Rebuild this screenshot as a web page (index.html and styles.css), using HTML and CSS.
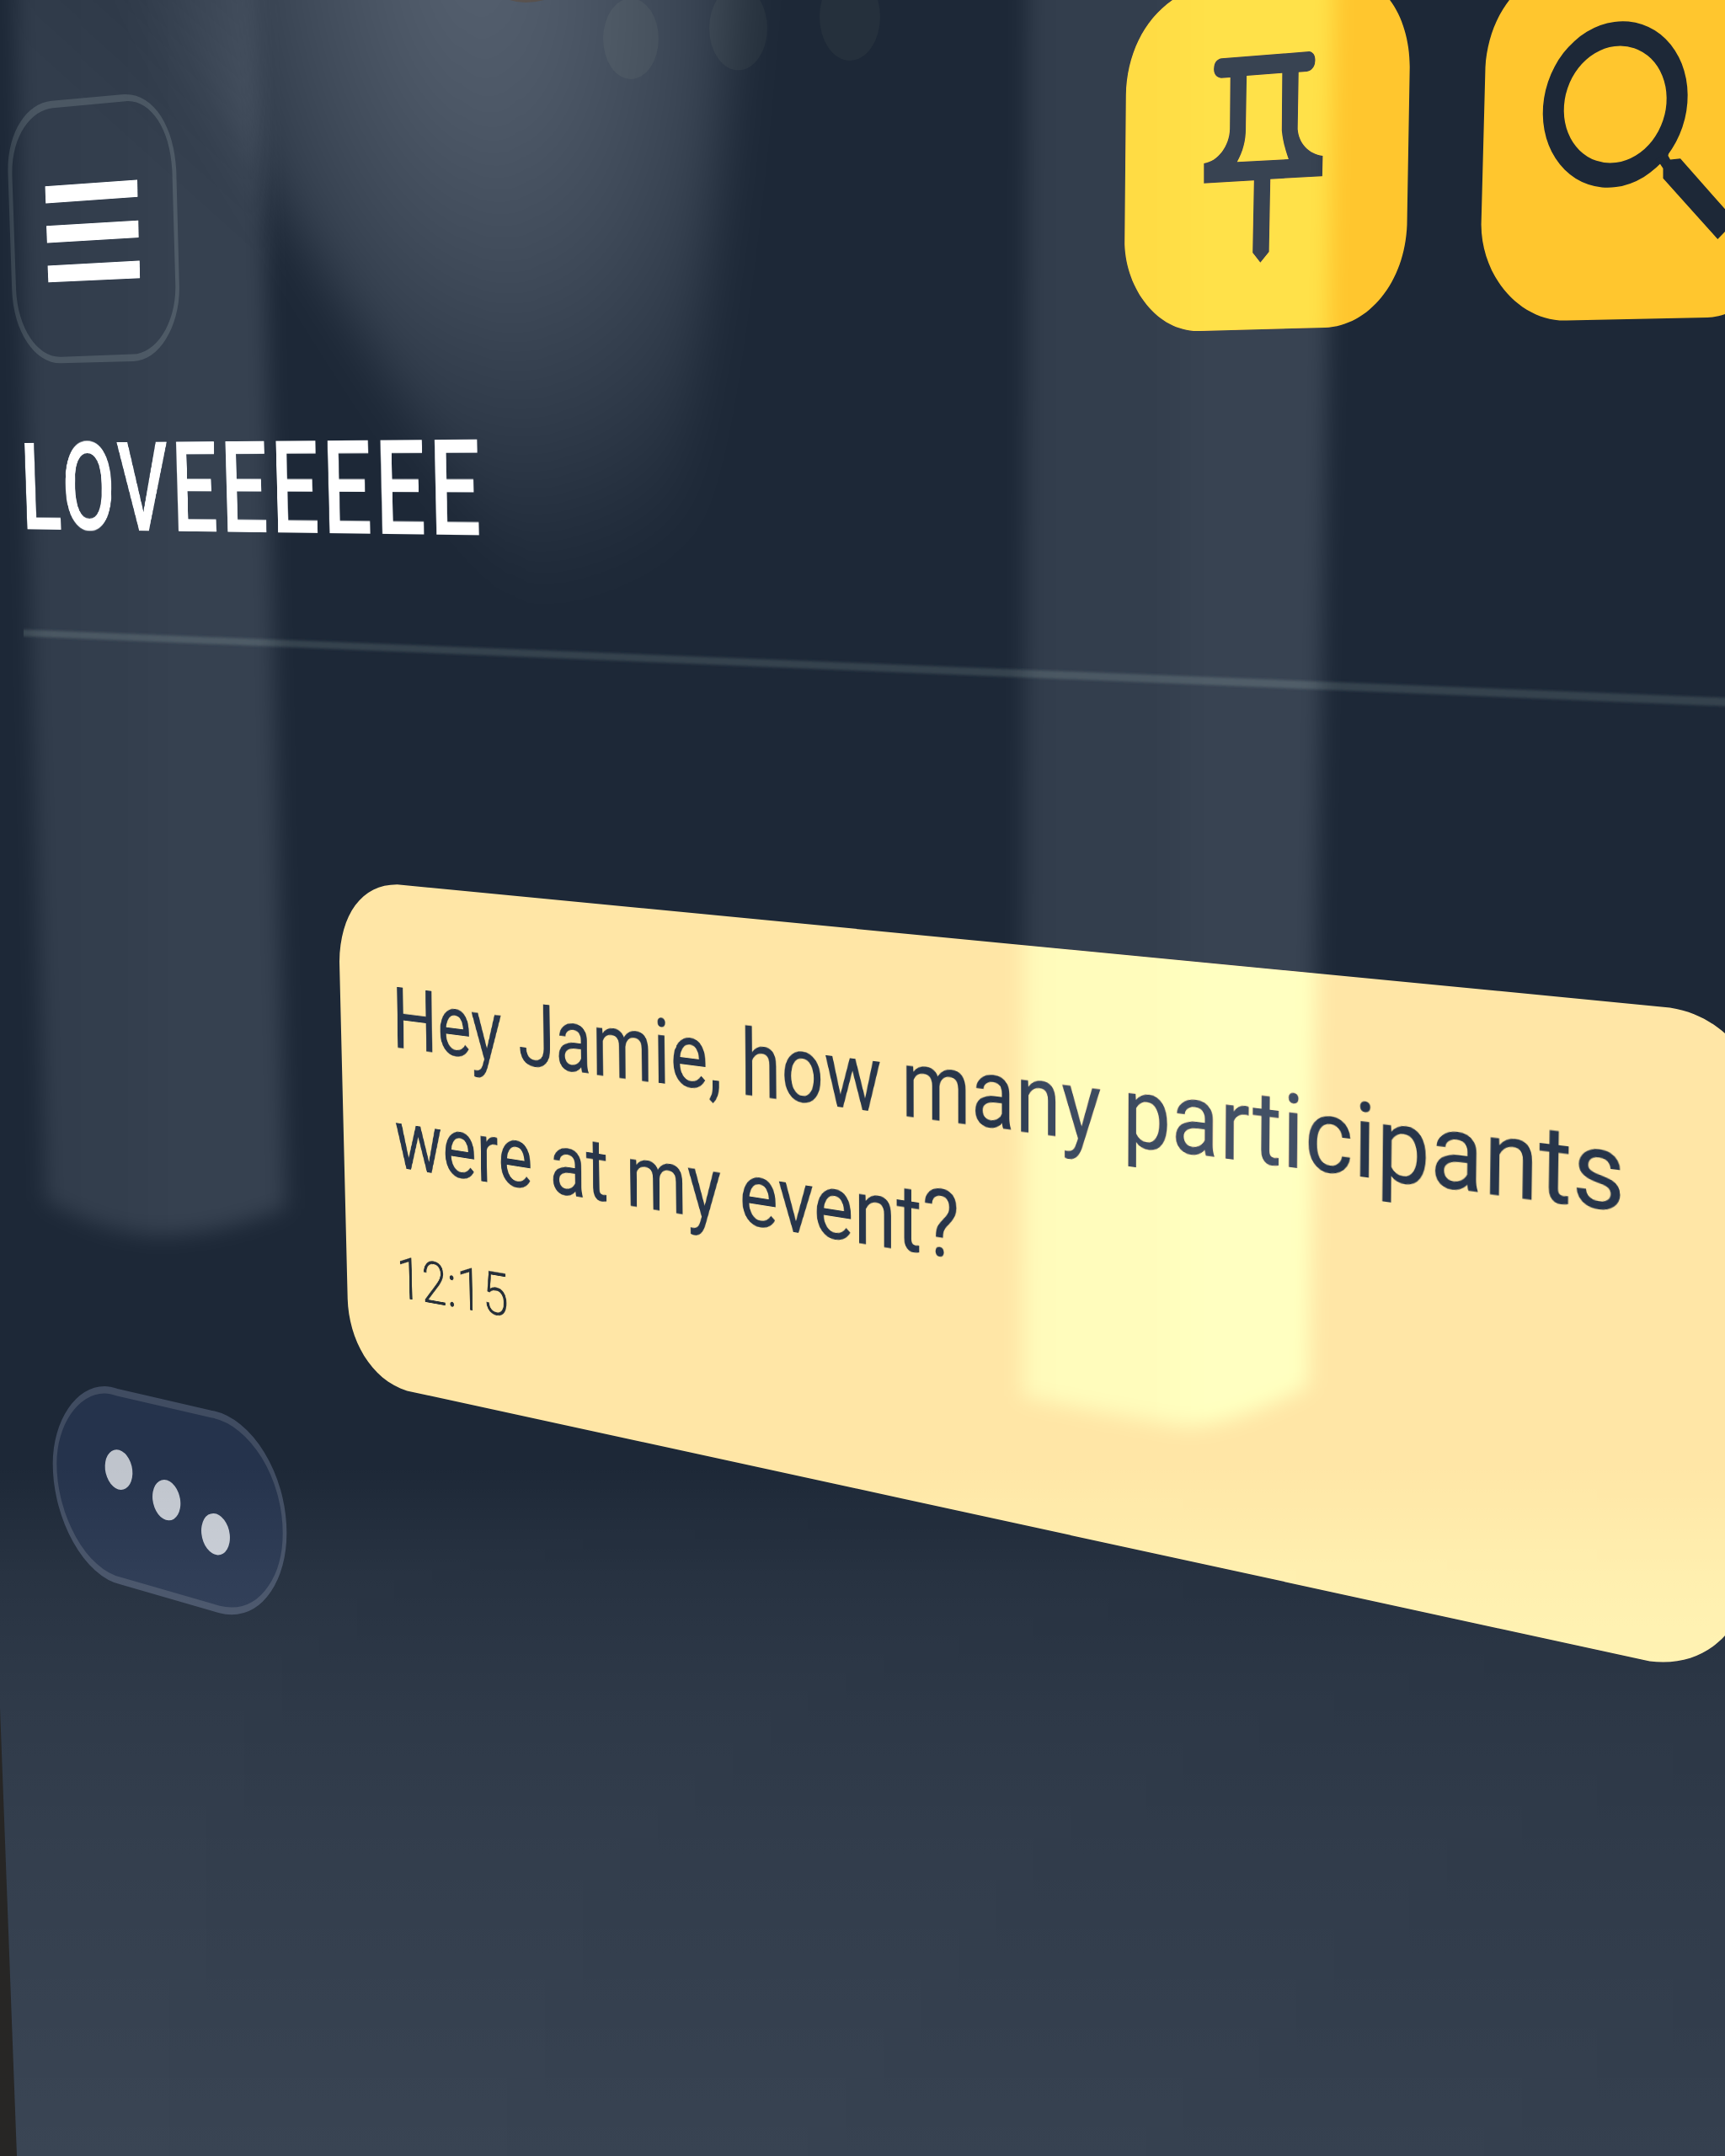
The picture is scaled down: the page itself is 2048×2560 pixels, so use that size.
FILE: index.html
```html
<!DOCTYPE html>
<html lang="en">
<head>
<meta charset="utf-8">
<title>Chat</title>
<link rel="stylesheet" href="styles.css">
</head>
<body>
<main class="screen">
  <svg class="layer" viewBox="0 0 2048 2560" aria-hidden="true">
    <defs>
      <filter id="hairline" filterUnits="userSpaceOnUse" x="0" y="700" width="2048" height="180"><feGaussianBlur stdDeviation="0 1.400"/></filter>
    </defs>
    <path class="bezel" d="M0 2028 L20 2560 H0Z"/>
    <path class="avatar" d="M600 -2 Q622 8 653 -2Z"/>

    <g class="typing-faint">
      <ellipse cx="749" cy="46" rx="33" ry="48"/>
      <ellipse cx="876.500" cy="33.500" rx="34.500" ry="50"/>
      <ellipse cx="1009" cy="20" rx="36" ry="52"/>
    </g>

    <!-- menu button -->
    <path class="outline" fill-rule="evenodd" d="M61 119.800 L147 112 C182 110 207 150 209.300 202.500 L212.800 336.400 C215 385 190 428 158.800 429 L72.700 431.300 C42 432 16 395 14.200 344 L9.600 210 C7 160 30 123 61 119.800Z
      M63 128.200 C36 131 13 162 14.500 210 L19.100 344 C21 390 45 425 72.700 423.700 L157.700 420.600 C186 420 210 382 208.200 336.400 L204.400 202.500 C202 152 178 118 149.300 120.200Z"/>
    <g class="menu-bars">
      <path d="M53.600 221.200 L163 213.600 L163.400 233.800 L54.300 241.500Z"/>
      <path d="M55.100 268.300 L164.200 261.800 L164.600 282 L55.900 288.600Z"/>
      <path d="M56.600 315.400 L165.700 309.600 L166.100 330.300 L57.400 335.300Z"/>
    </g>

    <path class="outline" filter="url(#hairline)" d="M28 747.500 L1024 787.500 L2048 828.500 V838.500 L1024 796.500 L28 755.500Z"/>

    <!-- pin button -->
    <path class="button" d="M1336.800 113 C1338 60 1362 15 1405 -8 L1625 -20 C1655 -8 1674 35 1673.700 80 L1670.500 266.700 C1668 335 1625 387 1573.200 389 L1425 393 C1376 395 1337 345 1335.200 290Z"/>
    <path class="glyph" fill-rule="evenodd" transform="translate(1200 0) scale(.5408 .3333)" d="M462 208 L655 183 C665 185 670 200 668 222 C667 240 660 252 650 255 L632 257 L630 460 C632 510 655 550 685 555 L684 628 L570 638 L567 897 L548 935 L531 900 L534 643 L424 653 L424 582 C455 575 480 520 481 460 L482 276 L462 278 C450 275 445 260 446 243 C447 222 452 212 462 208Z M518 270 L596 260 L595 465 C597 500 602 530 610 567 L497 577 C510 540 516 500 516 460Z"/>

    <!-- search button -->
    <path class="button" d="M1763.500 80 C1765 50 1776 20 1792 0 V-10 H2060 V368 C2050 373 2040 376.500 2027 377 L1860 380.500 C1806 382 1759 330 1758.600 266.700Z"/>
    <g transform="translate(1917.700 124) rotate(18.600)">
      <path class="glyph" fill-rule="evenodd" d="M-84.200 0 a84.200 100.200 0 1 0 168.400 0 a84.200 100.200 0 1 0 -168.400 0Z M-59.800 0 a59.800 70.500 0 1 0 119.600 0 a59.800 70.500 0 1 0 -119.600 0Z"/>
    </g>
    <path class="glyph" d="M1981 180 L1980.500 185 L1983 189.500 L1995 188.300 L2048 248.300 V275 L2039.300 284 L1974.500 211.700 V200 L1970.500 194 L1965 190Z"/>

    <!-- message bubble -->
    <path class="bubble" d="M471.800 1050.300 L1982.700 1196.400 C2012 1201 2032 1213 2048 1227 H2070 V1935 L2048 1942 C2026 1966 1996 1977 1958.500 1972.500 L483.300 1651.400 C440 1638 414 1590 412.700 1542 L403 1142 C404 1085 430 1050 471.800 1050.300Z"/>

    <!-- more button -->
    <g transform="translate(0 1600) scale(.33333 .61224)">
      <path class="more" d="M372 82 C388 82 402 84 418 87 L752 129 C895 143 1014 250 1014 360 C1014 446 935 511 825 511 C806 511 796 510 782 508 L432 453 C305 438 195 330 195 225 C195 146 275 82 372 82Z"/>
      <g class="more-dots">
        <ellipse cx="423" cy="237" rx="50" ry="37.500" transform="rotate(18 423 237)"/>
        <ellipse cx="593" cy="296" rx="51" ry="38" transform="rotate(18 593 296)"/>
        <ellipse cx="768" cy="362" rx="52" ry="39" transform="rotate(18 768 362)"/>
      </g>
    </g>
  </svg>

  <h1 class="tilt title" data-quad="28.700,526.600 566.800,522.400 569,635.700 32.100,628.600">LOVEEEEEE</h1>
  <p class="tilt message" data-quad="470.700,1172.400 1926,1346 1924.500,1438.500 471.800,1244.300">Hey Jamie, how many participants</p>
  <p class="tilt message" data-quad="469.300,1315.500 1135.600,1415 1135.400,1494.500 470.800,1386">were at my event?</p>
  <time class="tilt stamp" data-quad="474.500,1491.500 601.200,1513 602,1563.500 475.800,1540.800">12:15</time>

  <!-- light falling on the glass -->
  <svg class="layer glare" viewBox="0 0 2048 2560" aria-hidden="true">
    <defs>
      <linearGradient id="pillar-left" gradientUnits="userSpaceOnUse" x1="20" y1="0" x2="330" y2="0">
        <stop offset="0" stop-color="#fff" stop-opacity=".08"/>
        <stop offset=".4" stop-color="#fff" stop-opacity=".087"/>
        <stop offset=".6" stop-color="#fff" stop-opacity=".097"/>
        <stop offset="1" stop-color="#fff" stop-opacity=".097"/>
      </linearGradient>
      <linearGradient id="pillar-right" gradientUnits="userSpaceOnUse" x1="1210" y1="0" x2="1580" y2="0">
        <stop offset="0" stop-color="#fff" stop-opacity=".083"/>
        <stop offset=".45" stop-color="#fff" stop-opacity=".088"/>
        <stop offset=".6" stop-color="#fff" stop-opacity=".106"/>
        <stop offset="1" stop-color="#fff" stop-opacity=".106"/>
      </linearGradient>
      <radialGradient id="beam" gradientUnits="userSpaceOnUse" cx="0" cy="0" r="1" gradientTransform="matrix(425 0 75 750 565 -40)">
        <stop offset="0" stop-color="#fff" stop-opacity=".22"/>
        <stop offset=".25" stop-color="#fff" stop-opacity=".185"/>
        <stop offset=".5" stop-color="#fff" stop-opacity=".133"/>
        <stop offset=".75" stop-color="#fff" stop-opacity=".068"/>
        <stop offset=".9" stop-color="#fff" stop-opacity=".024"/>
        <stop offset="1" stop-color="#fff" stop-opacity="0"/>
      </radialGradient>
      <linearGradient id="floor" gradientUnits="userSpaceOnUse" x1="0" y1="1740" x2="0" y2="2560">
        <stop offset="0" stop-color="#fff" stop-opacity="0"/>
        <stop offset=".07" stop-color="#fff" stop-opacity=".02"/>
        <stop offset=".165" stop-color="#fff" stop-opacity=".045"/>
        <stop offset=".35" stop-color="#fff" stop-opacity=".072"/>
        <stop offset=".56" stop-color="#fff" stop-opacity=".09"/>
        <stop offset="1" stop-color="#fff" stop-opacity=".114"/>
      </linearGradient>
      <linearGradient id="floor-fade" gradientUnits="userSpaceOnUse" x1="0" y1="0" x2="2048" y2="0">
        <stop offset="0" stop-color="#fff"/>
        <stop offset="1" stop-color="#fff" stop-opacity=".82"/>
      </linearGradient>
      <linearGradient id="pillar-fade" gradientUnits="userSpaceOnUse" x1="330" y1="-20" x2="150" y2="180">
        <stop offset="0" stop-color="#fff" stop-opacity=".45"/>
        <stop offset=".55" stop-color="#fff" stop-opacity=".82"/>
        <stop offset="1" stop-color="#fff"/>
      </linearGradient>
      <mask id="floor-mask" maskUnits="userSpaceOnUse" x="0" y="1600" width="2048" height="960" style="mask-type: alpha">
        <rect x="0" y="1600" width="2048" height="960" fill="url(#floor-fade)"/>
      </mask>
      <mask id="pillar-mask" maskUnits="userSpaceOnUse" x="-100" y="-100" width="600" height="1700" style="mask-type: alpha">
        <rect x="-100" y="-100" width="600" height="1700" fill="url(#pillar-fade)"/>
      </mask>
      <filter id="soft" filterUnits="userSpaceOnUse" x="-100" y="-200" width="2300" height="2100"><feGaussianBlur stdDeviation="12"/></filter>
      <filter id="softer" filterUnits="userSpaceOnUse" x="-100" y="-200" width="2300" height="2100"><feGaussianBlur stdDeviation="28"/></filter>
    </defs>
    <g mask="url(#pillar-mask)">
      <path fill="url(#pillar-left)" filter="url(#soft)" d="M16 -100 L26 300 L54 1425 C100 1452 150 1466 190 1467 C250 1465 300 1450 339 1434 L315 300 L303 -100Z"/>
    </g>
    <path fill="url(#beam)" filter="url(#softer)" d="M60 -150 L200 40 L335 250 L640 740 L800 740 L858 200 L890 -150Z"/>
    <path fill="url(#pillar-right)" filter="url(#soft)" d="M1220 -100 L1214 1658 C1280 1672 1350 1685 1410 1694 C1460 1690 1510 1668 1553 1646 L1586 -100Z"/>
    <g mask="url(#floor-mask)">
      <path fill="url(#floor)" d="M0 1600 H2048 V2560 H20 L0 2028Z"/>
    </g>
  </svg>
</main>
<script src="tilt.js"></script>
</body>
</html>
```

FILE: styles.css
```css
body {
  margin: 0;
}

.screen {
  position: relative;
  width: 2048px;
  height: 2560px;
  overflow: hidden;
  isolation: isolate;
  background: #1d2837;
  font-family: Roboto, sans-serif;
}

.layer {
  position: absolute;
  inset: 0;
  width: 2048px;
  height: 2560px;
}

.glare {
  mix-blend-mode: plus-lighter;
  pointer-events: none;
}

.bezel {
  fill: #272625;
}

.avatar {
  fill: #261f1c;
}

.typing-faint {
  fill: #25303c;
}

.outline {
  fill: #36424e;
}

.menu-bars {
  fill: #fff;
}

.button {
  fill: #ffc62e;
}

.glyph {
  fill: #1d2837;
}

.bubble {
  fill: #ffe6a6;
}

.more {
  fill: #25334c;
  stroke: #404c61;
  stroke-width: 14;
}

.more-dots {
  fill: #bfc4cc;
}

.tilt {
  position: absolute;
  left: 0;
  top: 0;
  margin: 0;
  line-height: 1;
  white-space: nowrap;
  transform-origin: 0 0;
}

.title {
  color: #fff;
  font-size: 150px;
  font-weight: 500;
  letter-spacing: 6px;
}

.message {
  color: #27354a;
  font-size: 120px;
  font-weight: 400;
}

.stamp {
  color: #262f38;
  font-size: 100px;
  font-weight: 300;
}
```

FILE: tilt.js
```js
// Projects each line of text onto the slanted glass: the box from the cap
// height to the baseline lands on the four corners given in data-quad.
function solve(m) {
  const n = m.length;
  for (let i = 0; i < n; i++) {
    let p = i;
    for (let r = i + 1; r < n; r++) if (Math.abs(m[r][i]) > Math.abs(m[p][i])) p = r;
    [m[i], m[p]] = [m[p], m[i]];
    for (let r = 0; r < n; r++) {
      if (r === i) continue;
      const f = m[r][i] / m[i][i];
      for (let c = i; c <= n; c++) m[r][c] -= f * m[i][c];
    }
  }
  return m.map((row, i) => row[n] / row[i]);
}

const ctx = document.createElement('canvas').getContext('2d');
document.querySelectorAll('.tilt').forEach((el) => {
  const style = getComputedStyle(el);
  const size = parseFloat(style.fontSize);
  ctx.font = `${style.fontWeight} ${size}px ${style.fontFamily}`;
  ctx.letterSpacing = style.letterSpacing === 'normal' ? '0px' : style.letterSpacing;
  const ink = ctx.measureText(el.textContent);
  const left = -ink.actualBoundingBoxLeft;
  const right = ink.actualBoundingBoxRight;
  const base = size * 0.8418;
  const cap = base - size * 0.711;
  const from = [[left, cap], [right, cap], [right, base], [left, base]];
  const to = el.dataset.quad.split(' ').map((p) => p.split(',').map(Number));
  const rows = [];
  from.forEach(([x, y], i) => {
    const [u, v] = to[i];
    rows.push([x, y, 1, 0, 0, 0, -x * u, -y * u, u]);
    rows.push([0, 0, 0, x, y, 1, -x * v, -y * v, v]);
  });
  const [a, b, c, d, e, f, g, h] = solve(rows);
  el.style.transform = `matrix3d(${[a, d, 0, g, b, e, 0, h, 0, 0, 1, 0, c, f, 0, 1].join(',')})`;
});
```
